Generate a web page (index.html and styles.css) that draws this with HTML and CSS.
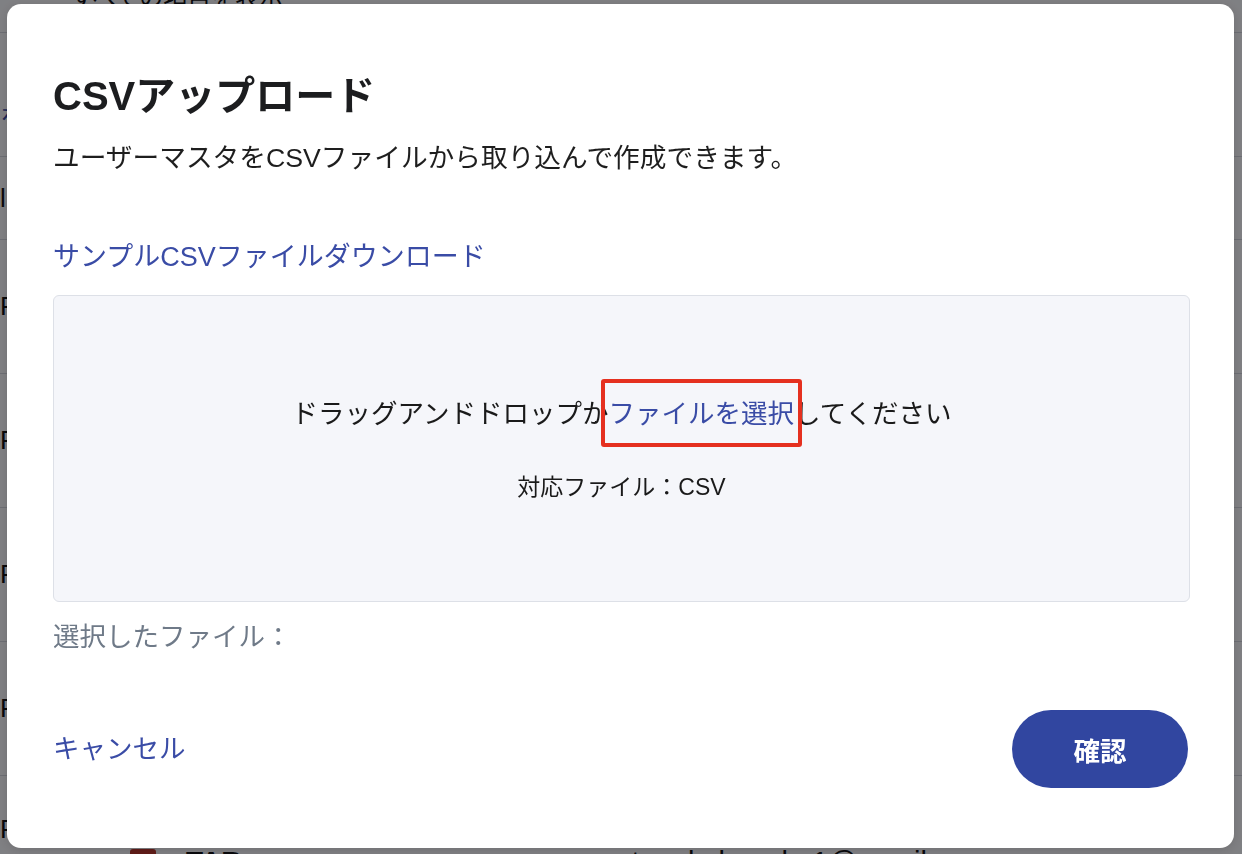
FILE: index.html
```html
<!DOCTYPE html>
<html lang="ja">
<head>
<meta charset="utf-8">
<title>CSVアップロード</title>
<link rel="stylesheet" href="styles.css">
</head>
<body>
<div class="page">
  <div class="row row-head"><span class="head-text">すべての項目を表示</span></div>
  <div class="row row-a"><div class="edge"><span class="edge-link">を</span></div></div>
  <div class="row row-b"><div class="edge"><span>l</span></div></div>
  <div class="row"><div class="edge"><span>R</span></div></div>
  <div class="row"><div class="edge"><span>R</span></div></div>
  <div class="row"><div class="edge"><span>R</span></div></div>
  <div class="row"><div class="edge"><span>R</span></div></div>
  <div class="row row-last">
    <div class="edge edge-last"><span>R</span></div>
    <div class="user"><span class="avatar"></span><span class="user-name">TAR</span></div>
    <div class="email">tanakakanako1@gmail.com</div>
  </div>
</div>

<div class="overlay"></div>

<div class="modal" role="dialog" aria-labelledby="modal-title">
  <h1 class="modal-title" id="modal-title">CSVアップロード</h1>
  <p class="modal-desc">ユーザーマスタをCSVファイルから取り込んで作成できます。</p>
  <a class="sample-link" href="#">サンプルCSVファイルダウンロード</a>
  <div class="dropzone">
    <p class="drop-text">ドラッグアンドドロップか<span class="pick">ファイルを選択</span>してください</p>
    <p class="drop-spec">対応ファイル：CSV</p>
  </div>
  <p class="selected">選択したファイル：</p>
  <div class="modal-footer">
    <a class="cancel" href="#">キャンセル</a>
    <button class="confirm" type="button">確認</button>
  </div>
</div>
</body>
</html>
```

FILE: styles.css
```css
* { box-sizing: border-box; }

html, body {
  margin: 0;
  padding: 0;
  height: 100%;
  overflow: hidden;
}

body {
  background: #ffffff;
  font-family: "Liberation Sans", "Noto Sans CJK JP", sans-serif;
  color: #1e1e1e;
}

/* ---------- background page ---------- */
.page {
  width: 100%;
}

.row {
  height: 134px;
  display: flex;
  align-items: center;
  border-bottom: 1px solid #d9dbe0;
  font-size: 26px;
  color: #111;
}

.row-head {
  height: 33px;
  align-items: flex-start;
}

.head-text {
  margin-top: -22px;
  margin-left: 70px;
  font-size: 24px;
}

.row-a { height: 124px; align-items: flex-end; padding-bottom: 22px; }
.row-b { height: 83px; }

.edge {
  width: 8px;
  display: flex;
  justify-content: flex-start;
  white-space: nowrap;
}

.edge-link { color: #3a4ea8; }

.row-last {
  align-items: flex-start;
  padding-top: 38px;
}

.edge-last {
  margin-top: 0;
}

.user {
  display: flex;
  align-items: center;
  gap: 30px;
  margin-left: 122px;
  margin-top: 32px;
}

.avatar {
  width: 26px;
  height: 26px;
  background: #c0392b;
  border-radius: 3px;
}

.user-name {
  font-weight: bold;
  font-size: 28px;
}

.email {
  margin-left: 390px;
  margin-top: 32px;
  font-size: 29px;
}

.overlay {
  position: fixed;
  inset: 0;
  background: rgba(0, 2, 8, 0.5);
}

/* ---------- modal ---------- */
.modal {
  position: fixed;
  left: 7px;
  top: 4px;
  width: 1227px;
  height: 844px;
  background: #ffffff;
  border-radius: 14px;
  box-shadow: 0 2px 10px rgba(0, 0, 0, 0.12);
  padding: 68px 44px 0 46px;
  display: flex;
  flex-direction: column;
  align-items: flex-start;
}

.modal-title {
  margin: 0;
  font-size: 40px;
  line-height: 48px;
  font-weight: 700;
  color: #1c1d1f;
}

.modal-desc {
  margin: 20px 0 0;
  font-size: 26.7px;
  line-height: 36px;
  color: #1e1e1e;
}

.sample-link {
  margin-top: 63px;
  font-size: 27px;
  line-height: 36px;
  color: #3a4ca6;
  text-decoration: none;
}

.dropzone {
  margin-top: 20px;
  width: 100%;
  height: 307px;
  background: #f5f6fa;
  border: 1px solid #dde0e7;
  border-radius: 6px;
  display: flex;
  flex-direction: column;
  align-items: center;
  justify-content: center;
  gap: 40px;
}

.drop-text {
  margin: 0;
  font-size: 26.5px;
  line-height: 36px;
  color: #1a1a1a;
}

.pick {
  position: relative;
  display: inline-block;
  color: #3a4ca6;
}

.pick::after {
  content: "";
  position: absolute;
  left: -8px;
  right: -8px;
  top: -17px;
  bottom: -15px;
  border: 4px solid #e5301f;
  border-radius: 3px;
}

.drop-spec {
  margin: 0;
  font-size: 23px;
  line-height: 30px;
  color: #1a1a1a;
}

.selected {
  margin: 17px 0 0;
  font-size: 26.5px;
  line-height: 36px;
  color: #6f7a88;
}

.modal-footer {
  margin-top: 55px;
  width: 100%;
  display: flex;
  justify-content: space-between;
  align-items: center;
}

.cancel {
  font-size: 26.5px;
  line-height: 36px;
  color: #3a4ca6;
  text-decoration: none;
}

.confirm {
  width: 176px;
  height: 78px;
  margin-right: 2px;
  border: none;
  border-radius: 39px;
  background: #3146a0;
  color: #ffffff;
  font-family: "Liberation Sans", "Noto Sans CJK JP", sans-serif;
  font-size: 26.5px;
  font-weight: 700;
  cursor: pointer;
}
```
